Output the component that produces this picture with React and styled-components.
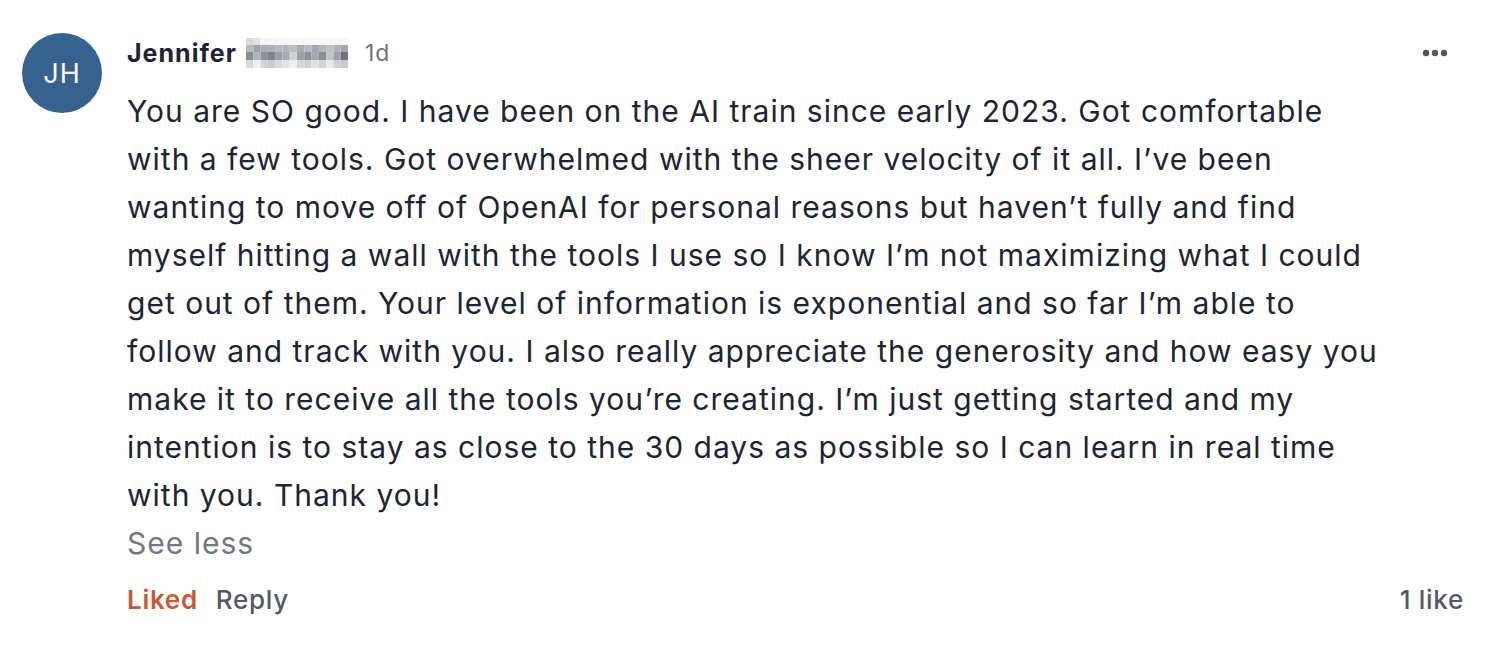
import styled, { createGlobalStyle } from "styled-components";

const GlobalStyle = createGlobalStyle`
  html, body {
    margin: 0;
    padding: 0;
    background: #ffffff;
  }
  body {
    font-family: Inter, "Noto Sans", sans-serif;
    -webkit-font-smoothing: antialiased;
  }
`;

const Comment = styled.div`
  display: flex;
  gap: 25px;
  padding: 33px 44px 0 22px;
`;

const Avatar = styled.div`
  flex: none;
  width: 80px;
  height: 80px;
  border-radius: 50%;
  background: #35628f;
  color: #ffffff;
  display: flex;
  align-items: center;
  justify-content: center;
  font-size: 27px;
  letter-spacing: 1px;
`;

const Main = styled.div`
  flex: 1;
  min-width: 0;
`;

const Header = styled.div`
  display: flex;
  align-items: center;
  height: 40px;
`;

const Name = styled.span`
  font-size: 25px;
  font-weight: 700;
  color: #1c2433;
  letter-spacing: 1px;
`;

const Time = styled.span`
  font-size: 23px;
  color: #6b7280;
  letter-spacing: 1px;
  margin-left: 17px;
`;

const MoreButton = styled.button`
  margin-left: auto;
  margin-right: 16px;
  border: none;
  background: none;
  padding: 0;
  display: flex;
  align-items: center;
  cursor: pointer;
`;

const Body = styled.p`
  margin: 14px 0 0;
  max-width: 1256px;
  font-size: 30px;
  line-height: 48px;
  letter-spacing: 1px;
  color: #1d2433;
`;

const SeeLess = styled.div`
  font-size: 30px;
  line-height: 48px;
  letter-spacing: 1px;
  color: #727883;
`;

const Actions = styled.div`
  display: flex;
  align-items: center;
  margin-top: 13px;
  font-size: 26px;
  line-height: 40px;
  letter-spacing: 0.7px;
`;

const Action = styled.span`
  font-weight: ${(p) => (p.$active ? 600 : 500)};
  color: ${(p) => (p.$active ? "#c85a33" : "#535a66")};
  margin-right: 18px;
`;

const Likes = styled.span`
  margin-left: auto;
  color: #535a66;
  font-weight: 500;
`;

// pixelated surname, four rows of blurred cells
const blurRows = [
  ["#d8d9dc", "#e0e1e3", "#f3f3f4", "#f7f7f8", "#f7f7f8", "#f7f7f8", "#f7f7f8",
   "#f7f7f8", "#f7f7f8", "#f7f7f8", "#f7f7f8", "#f7f7f8", "#f7f7f8", "#f7f7f8"],
  ["#b8bbc0", "#9fa2a8", "#a9acb1", "#aeb1b6", "#b4b7bc", "#b1b4b9", "#bcbec2",
   "#a8abb0", "#b6b9bd", "#a3a6ab", "#b3b6ba", "#bfc1c5", "#b0b3b8", "#a4a7ac"],
  ["#8a8d94", "#b0b3b8", "#8f9299", "#7f838a", "#9a9da3", "#a8abb0", "#d0d2d5",
   "#9c9fa5", "#8e9198", "#a5a8ad", "#8b8e95", "#c4c6c9", "#a0a3a9", "#6f737b"],
  ["#d6d7da", "#eeeff0", "#d2d3d6", "#c9cbce", "#d7d8db", "#e3e4e6", "#f0f0f1",
   "#d5d6d9", "#cfd0d3", "#e0e1e3", "#d3d4d7", "#e9eaeb", "#d0d1d4", "#c6c8cb"],
];

const BlurredName = () => (
  <svg
    width="102"
    height="30"
    viewBox="0 0 98 30"
    preserveAspectRatio="none"
    style={{ marginLeft: 9 }}
  >
    {blurRows.map((row, r) =>
      row.map((c, i) => (
        <rect
          key={`${r}-${i}`}
          x={i * 7}
          y={[0, 7, 14, 22][r]}
          width={7}
          height={r === 2 ? 8 : r === 3 ? 8 : 7}
          fill={c}
        />
      ))
    )}
  </svg>
);

const Dots = () => (
  <svg width="26" height="8" viewBox="0 0 26 8">
    <circle cx="4" cy="4" r="3.2" fill="#4f5563" />
    <circle cx="13" cy="4" r="3.2" fill="#4f5563" />
    <circle cx="22" cy="4" r="3.2" fill="#4f5563" />
  </svg>
);

export default function App() {
  return (
    <>
      <GlobalStyle />
      <Comment>
        <Avatar>JH</Avatar>
        <Main>
          <Header>
            <Name>Jennifer</Name>
            <BlurredName />
            <Time>1d</Time>
            <MoreButton aria-label="More">
              <Dots />
            </MoreButton>
          </Header>
          <Body>
            You are SO good. I have been on the AI train since early 2023. Got
            comfortable with a few tools. Got overwhelmed with the sheer
            velocity of it all. I’ve been wanting to move off of OpenAI for
            personal reasons but haven’t fully and find myself hitting a wall
            with the tools I use so I know I’m not maximizing what I could get
            out of them. Your level of information is exponential and so far
            I’m able to follow and track with you. I also really appreciate the
            generosity and how easy you make it to receive all the tools you’re
            creating. I’m just getting started and my intention is to stay as
            close to the 30 days as possible so I can learn in real time with
            you. Thank you!
          </Body>
          <SeeLess>See less</SeeLess>
          <Actions>
            <Action $active>Liked</Action>
            <Action>Reply</Action>
            <Likes>1 like</Likes>
          </Actions>
        </Main>
      </Comment>
    </>
  );
}
